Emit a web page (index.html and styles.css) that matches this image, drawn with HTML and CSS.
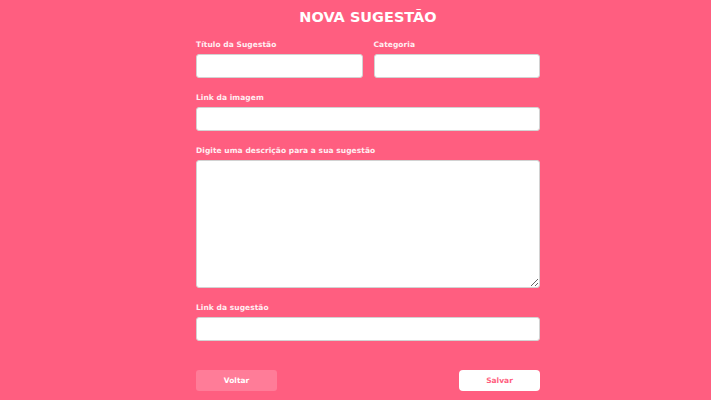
FILE: index.html
```html
<!DOCTYPE html>
<html lang="pt">
<head>
<meta charset="utf-8">
<link rel="stylesheet" href="styles.css">
</head>
<body>
<div class="page">
  <h1 class="title">NOVA SUGESTÃO</h1>
  <form class="form">
    <div class="row">
      <div class="field">
        <label class="label">Título da Sugestão</label>
        <input class="input" type="text">
      </div>
      <div class="field">
        <label class="label">Categoria</label>
        <input class="input" type="text">
      </div>
    </div>
    <div class="field">
      <label class="label">Link da imagem</label>
      <input class="input" type="text">
    </div>
    <div class="field">
      <label class="label">Digite uma descrição para a sua sugestão</label>
      <textarea class="input textarea"></textarea>
    </div>
    <div class="field">
      <label class="label">Link da sugestão</label>
      <input class="input" type="text">
    </div>
    <div class="actions">
      <button type="button" class="btn btn-back">Voltar</button>
      <button type="button" class="btn btn-save">Salvar</button>
    </div>
  </form>
</div>
</body>
</html>
```
FILE: styles.css
```css
* { box-sizing: border-box; }
html, body {
  margin: 0;
  height: 100%;
  background: #ff5e80;
}
body {
  font-family: "DejaVu Sans", "Open Sans", sans-serif;
}
.page {
  width: 344px;
  margin-left: 196px;
  padding-top: 6px;
}
.title {
  margin: 0;
  text-align: center;
  color: #fff;
  font-size: 14.5px;
  font-weight: bold;
  line-height: 22px;
}
.form {
  display: flex;
  flex-direction: column;
  margin-top: 12px;
}
.row {
  display: flex;
  gap: 11px;
}
.row .field { flex: 1; min-width: 0; }
.field {
  display: flex;
  flex-direction: column;
  margin-bottom: 15px;
}
.label {
  color: #ffeef2;
  font-size: 7.5px;
  font-weight: bold;
  line-height: 10px;
  letter-spacing: 0.05px;
  margin-bottom: 4px;
}
.input {
  width: 100%;
  min-width: 0;
  height: 24px;
  border: 1px solid #d2d2d2;
  border-radius: 3px;
  background: #fff;
  margin: 0;
  padding: 0 6px;
  display: block;
}
.textarea {
  height: 128px;
  resize: vertical;
}
.actions {
  display: flex;
  justify-content: space-between;
  margin-top: 14px;
}
.btn {
  width: 81px;
  height: 21px;
  border-radius: 3px;
  font-family: "DejaVu Sans", sans-serif;
  font-size: 7.5px;
  font-weight: bold;
  cursor: pointer;
  border: none;
}
.btn-back {
  background: #ff7c98;
  color: #fff;
}
.btn-save {
  background: #fff;
  color: #ff5e80;
  border-radius: 4px;
}
```
